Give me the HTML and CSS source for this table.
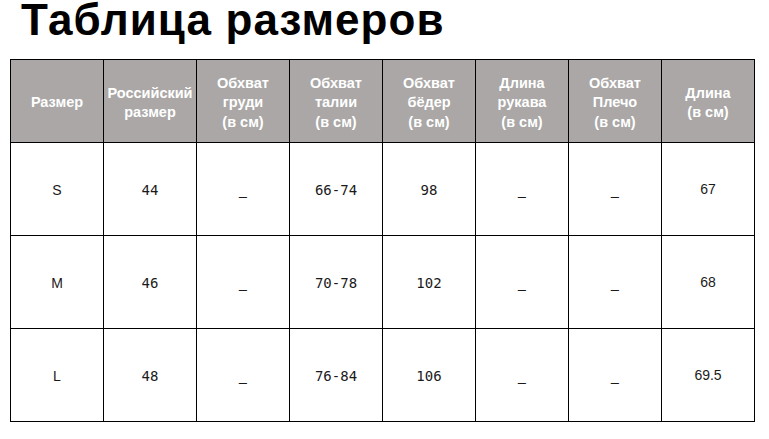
FILE: index.html
```html
<!DOCTYPE html>
<html lang="ru">
<head>
<meta charset="utf-8">
<title>Таблица размеров</title>
<link rel="stylesheet" href="styles.css">
</head>
<body>
<h1 class="title">Таблица размеров</h1>
<table class="sizes">
  <thead>
    <tr>
      <th>Размер</th>
      <th>Российский<br>размер</th>
      <th>Обхват<br>груди<br>(в см)</th>
      <th>Обхват<br>талии<br>(в см)</th>
      <th>Обхват<br>бёдер<br>(в см)</th>
      <th>Длина<br>рукава<br>(в см)</th>
      <th>Обхват<br>Плечо<br>(в см)</th>
      <th>Длина<br>(в см)</th>
    </tr>
  </thead>
  <tbody>
    <tr>
      <td class="sans">S</td>
      <td class="mono">44</td>
      <td class="dash">_</td>
      <td class="mono">66-74</td>
      <td class="mono">98</td>
      <td class="dash">_</td>
      <td class="dash">_</td>
      <td class="sans len">67</td>
    </tr>
    <tr>
      <td class="sans">M</td>
      <td class="mono">46</td>
      <td class="dash">_</td>
      <td class="mono">70-78</td>
      <td class="mono">102</td>
      <td class="dash">_</td>
      <td class="dash">_</td>
      <td class="sans len">68</td>
    </tr>
    <tr>
      <td class="sans">L</td>
      <td class="mono">48</td>
      <td class="dash">_</td>
      <td class="mono">76-84</td>
      <td class="mono">106</td>
      <td class="dash">_</td>
      <td class="dash">_</td>
      <td class="sans len">69.5</td>
    </tr>
  </tbody>
</table>
</body>
</html>
```
FILE: styles.css
```css
html, body {
  margin: 0;
  padding: 0;
  background: #fff;
}

body {
  font-family: "Liberation Sans", Arial, sans-serif;
  color: #111;
}

.title {
  margin: 0 0 19px 0;
  padding-left: 21px;
  font-size: 44px;
  line-height: 40px;
  letter-spacing: 1.1px;
  font-weight: bold;
  color: #000;
}

.sizes {
  margin-left: 10px;
  border-collapse: collapse;
  table-layout: fixed;
  width: 745px;
}

.sizes th,
.sizes td {
  border: 1px solid #000;
  text-align: center;
  vertical-align: middle;
  padding: 0;
}

.sizes th {
  height: 78px;
  background: #aaa7a6;
  color: #fff;
  font-size: 14.5px;
  font-weight: bold;
  line-height: 19.5px;
  padding-top: 4px;
}

.sizes td {
  height: 90px;
  font-size: 14px;
  color: #1a1a1a;
  padding-top: 2px;
}

.sans {
  font-family: "Liberation Sans", Arial, sans-serif;
}

.sizes td.len {
  padding-top: 0;
}

.mono {
  font-family: "DejaVu Sans Mono", monospace;
  font-size: 13px;
  color: #222;
}

.dash {
  font-family: "Liberation Sans", Arial, sans-serif;
  font-size: 13px;
}
```
